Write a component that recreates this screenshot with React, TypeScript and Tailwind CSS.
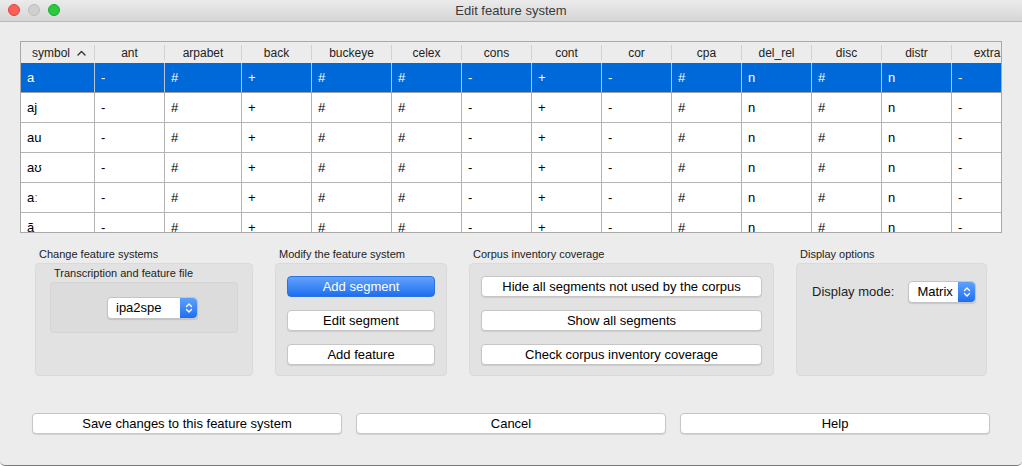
import React from "react";

const columns = [
  { key: "symbol", w: "w-[74px]" },
  { key: "ant", w: "w-[70px]" },
  { key: "arpabet", w: "w-[77px]" },
  { key: "back", w: "w-[70px]" },
  { key: "buckeye", w: "w-[80px]" },
  { key: "celex", w: "w-[70px]" },
  { key: "cons", w: "w-[70px]" },
  { key: "cont", w: "w-[70px]" },
  { key: "cor", w: "w-[70px]" },
  { key: "cpa", w: "w-[70px]" },
  { key: "del_rel", w: "w-[70px]" },
  { key: "disc", w: "w-[70px]" },
  { key: "distr", w: "w-[70px]" },
  { key: "extra", w: "w-[70px]" },
];

const values = ["-", "#", "+", "#", "#", "-", "+", "-", "#", "n", "#", "n", "-"];
const symbols = ["a", "aj", "au", "aʊ", "aː", "ã"];

const Stepper = () => (
  <div className="flex w-[17px] self-stretch items-center justify-center rounded-r-[4px] bg-gradient-to-b from-[#5ea0fb] to-[#1b6ff2]">
    <svg width="8" height="12" viewBox="0 0 8 12" fill="none" stroke="white" strokeWidth="1.4" strokeLinecap="round" strokeLinejoin="round">
      <path d="M1.5 4.5 L4 2 L6.5 4.5" />
      <path d="M1.5 7.5 L4 10 L6.5 7.5" />
    </svg>
  </div>
);

const Select = ({ label, className }: { label: string; className: string }) => (
  <div className={`flex items-stretch bg-white rounded-[4px] border border-[#c4c4c4] shadow-[0_1px_1px_rgba(0,0,0,0.12)] ${className}`}>
    <div className="flex-1 flex items-center pl-[8px] text-[13px] text-black">{label}</div>
    <Stepper />
  </div>
);

const Button = ({ children, primary = false, className = "" }: { children: React.ReactNode; primary?: boolean; className?: string }) => (
  <div
    className={`flex items-center justify-center h-[21px] rounded-[4px] text-[13px] ${
      primary
        ? "bg-gradient-to-b from-[#62a2fb] to-[#1a6ef0] text-white border border-[#2a72e0]"
        : "bg-white text-black border border-[#c6c6c6] shadow-[0_1px_1px_rgba(0,0,0,0.1)]"
    } ${className}`}
  >
    {children}
  </div>
);

const Group = ({ title, width, children }: { title: string; width: string; children: React.ReactNode }) => (
  <div className={`flex flex-col ${width}`}>
    <div className="pl-[4px] text-[11px] leading-[14px] mb-[2px] text-[#222]">{title}</div>
    <div className="h-[113px] bg-[#e2e2e2] border border-[#dadada] rounded-[4px]">{children}</div>
  </div>
);

export default function App() {
  return (
    <div className="w-[1022px] h-[466px] bg-white font-['Liberation_Sans',Arial,sans-serif]">
      <div className="w-full h-full flex flex-col bg-[#ececec] rounded-b-[5px] border-b border-[#7a7a7a] overflow-hidden">
        {/* title bar */}
        <div className="relative h-[22px] flex items-center justify-center bg-gradient-to-b from-[#ebebeb] to-[#d6d6d6] border-b border-[#b9b9b9]">
          <div className="absolute left-[8px] top-[4px] flex gap-[8px]">
            <div className="w-[12px] h-[12px] rounded-full bg-[#fc5f57] border border-[#e0443e]" />
            <div className="w-[12px] h-[12px] rounded-full bg-[#d0d0d0] border border-[#bdbdbd]" />
            <div className="w-[12px] h-[12px] rounded-full bg-[#2ac940] border border-[#1aac2c]" />
          </div>
          <span className="text-[13px] text-[#3a3a3a]">Edit feature system</span>
        </div>

        {/* table */}
        <div className="mt-[19px] ml-[20px] w-[982px] h-[192px] border border-[#a9a9a9] bg-white overflow-hidden">
          <div className="flex h-[21px] bg-[#ececec]">
            {columns.map((c, i) => (
              <div key={c.key} className={`${c.w} shrink-0 flex items-center py-[3px]`}>
                <div className={`flex-1 h-full flex items-center justify-center text-[12px] text-[#222] ${i < columns.length - 1 ? "border-r border-[#d2d2d2]" : ""}`}>
                  {c.key === "symbol" ? (
                    <span className="flex items-center w-full">
                      <span className="flex-1 text-center pl-[4px]">symbol</span>
                      <svg className="mr-[8px]" width="9" height="6" viewBox="0 0 9 6" fill="none" stroke="#333" strokeWidth="1.4" strokeLinecap="round" strokeLinejoin="round">
                        <path d="M1 5 L4.5 1.5 L8 5" />
                      </svg>
                    </span>
                  ) : (
                    c.key
                  )}
                </div>
              </div>
            ))}
          </div>
          {symbols.map((s, r) => {
            const sel = r === 0;
            const cells = [s, ...values];
            return (
              <div key={s} className={`flex h-[30px] border-b ${sel ? "bg-[#0069d9] border-[#a0a0a0] text-white" : "border-[#b4b4b4] text-black"}`}>
                {columns.map((c, i) => (
                  <div
                    key={c.key}
                    className={`${c.w} shrink-0 flex items-center pl-[6px] text-[13px] ${i < columns.length - 1 ? (sel ? "border-r border-[#b9c6d8]" : "border-r border-[#b4b4b4]") : ""}`}
                  >
                    {cells[i]}
                  </div>
                ))}
              </div>
            );
          })}
        </div>

        {/* groups */}
        <div className="flex gap-[22px] ml-[35px] mt-[14px]">
          <Group title="Change feature systems" width="w-[218px]">
            <div className="pl-[18px] pt-[2px] text-[11px] leading-[14px] text-[#222]">Transcription and feature file</div>
            <div className="mt-[2px] ml-[14px] w-[188px] h-[51px] bg-[#dcdcdc] border border-[#d4d4d4] rounded-[4px] pt-[14px] pl-[56px]">
              <Select label="ipa2spe" className="w-[91px] h-[22px]" />
            </div>
          </Group>
          <Group title="Modify the feature system" width="w-[172px]">
            <div className="flex flex-col gap-[13px] px-[11px] pt-[12px]">
              <Button primary>Add segment</Button>
              <Button>Edit segment</Button>
              <Button>Add feature</Button>
            </div>
          </Group>
          <Group title="Corpus inventory coverage" width="w-[305px]">
            <div className="flex flex-col gap-[13px] px-[11px] pt-[12px]">
              <Button>Hide all segments not used by the corpus</Button>
              <Button>Show all segments</Button>
              <Button>Check corpus inventory coverage</Button>
            </div>
          </Group>
          <Group title="Display options" width="w-[191px]">
            <div className="flex items-center pt-[17px] pl-[15px] gap-[14px]">
              <span className="text-[13px] text-[#222]">Display mode:</span>
              <Select label="Matrix" className="w-[68px] h-[22px]" />
            </div>
          </Group>
        </div>

        {/* bottom buttons */}
        <div className="flex gap-[14px] ml-[32px] mt-[37px]">
          <Button className="w-[310px]">Save changes to this feature system</Button>
          <Button className="w-[310px]">Cancel</Button>
          <Button className="w-[310px]">Help</Button>
        </div>
      </div>
    </div>
  );
}
